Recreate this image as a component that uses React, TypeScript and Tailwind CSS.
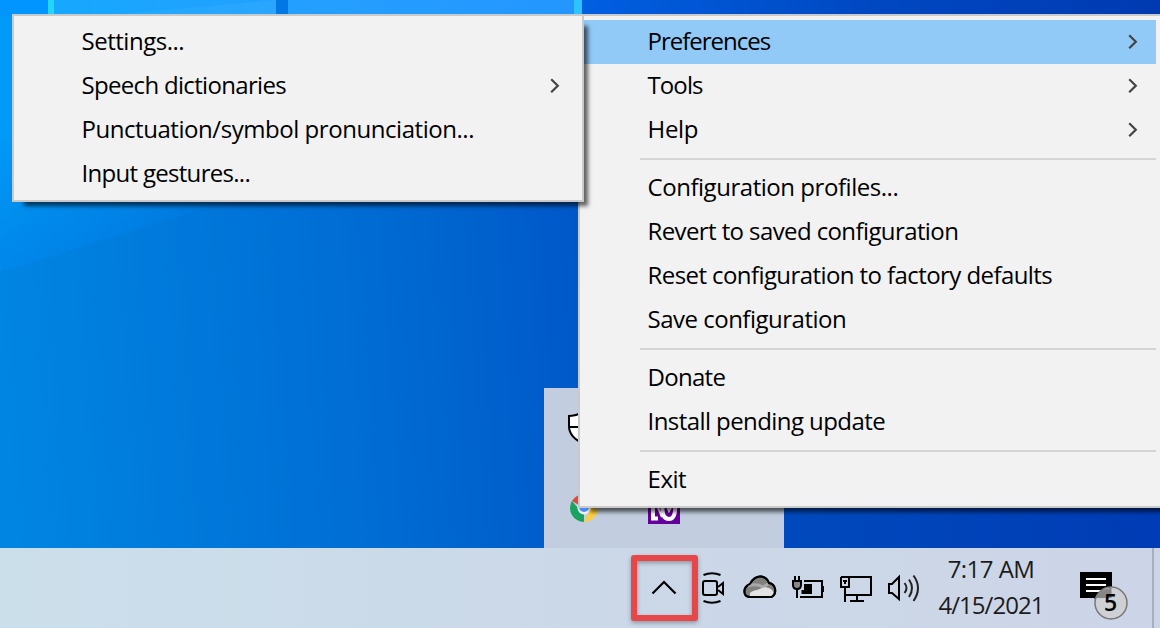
import type { ReactNode } from "react";

type Entry = { label: string; tracking: string; submenu?: boolean; active?: boolean } | "separator";

const preferences: Entry[] = [
  { label: "Settings...", tracking: "tracking-[-0.48px]", submenu: false },
  { label: "Speech dictionaries", tracking: "tracking-[-0.68px]", submenu: true },
  { label: "Punctuation/symbol pronunciation...", tracking: "tracking-[-0.45px]" },
  { label: "Input gestures...", tracking: "tracking-[-0.7px]" },
];

const mainMenu: Entry[] = [
  { label: "Preferences", tracking: "tracking-[-1px]", submenu: true, active: true },
  { label: "Tools", tracking: "tracking-[-0.9px]", submenu: true },
  { label: "Help", tracking: "tracking-[-0.3px]", submenu: true },
  "separator",
  { label: "Configuration profiles...", tracking: "tracking-[-0.46px]" },
  { label: "Revert to saved configuration", tracking: "tracking-[-0.6px]" },
  { label: "Reset configuration to factory defaults", tracking: "tracking-[-0.58px]" },
  { label: "Save configuration", tracking: "tracking-[-0.5px]" },
  "separator",
  { label: "Donate", tracking: "tracking-[-0.7px]" },
  { label: "Install pending update", tracking: "tracking-[-0.57px]" },
  "separator",
  { label: "Exit", tracking: "tracking-[-0.45px]" },
];

function Menu({ entries, className }: { entries: Entry[]; className: string }) {
  return (
    <ul
      className={`absolute border-2 border-[#cacaca] bg-[#f2f2f2] py-1 pr-1 text-[24px] text-black shadow-[8px_8px_4px_-4px_rgba(0,0,0,0.6)] ${className}`}
    >
      {entries.map((entry, i) =>
        entry === "separator" ? (
          <li key={i} className="flex h-[14px] items-center pl-[60px]">
            <span className="h-[2px] w-full bg-[#d5d5d5]" />
          </li>
        ) : (
          <li
            key={i}
            className={`flex h-11 items-center justify-between pr-[18px] pl-[67.5px] ${entry.active ? "bg-[#91c9f7]" : ""}`}
          >
            <span className={`pb-[2px] leading-[42px] whitespace-nowrap ${entry.tracking}`}>{entry.label}</span>
            {entry.submenu && (
              <svg width="10" height="16" viewBox="0 0 10 16" fill="none" stroke="#444" strokeWidth="2.2">
                <path d="M1.2 1.2 7.8 7.7 1.2 14.2" />
              </svg>
            )}
          </li>
        ),
      )}
    </ul>
  );
}

function TrayIcon({ x, children }: { x: number; children: ReactNode }) {
  return (
    <svg width="48" height="80" viewBox={`${x} 548 48 80`} fill="none" stroke="#000" strokeWidth="2" className="shrink-0">
      {children}
    </svg>
  );
}

function Wallpaper() {
  return (
    <svg width="1160" height="548" viewBox="0 0 1160 548" preserveAspectRatio="none" className="absolute inset-0">
      <defs>
        <linearGradient id="sky" gradientUnits="userSpaceOnUse" x1="0" y1="330" x2="1160" y2="250">
          <stop offset="0" stopColor="#0085e2" />
          <stop offset="0.14" stopColor="#007adc" />
          <stop offset="0.32" stopColor="#006cd3" />
          <stop offset="0.5" stopColor="#0058c8" />
          <stop offset="0.67" stopColor="#0049bd" />
          <stop offset="1" stopColor="#003bb4" />
        </linearGradient>
        <linearGradient id="beam" gradientUnits="userSpaceOnUse" x1="0" y1="130" x2="70" y2="270">
          <stop offset="0" stopColor="#009af8" />
          <stop offset="0.55" stopColor="#008fee" stopOpacity="0.9" />
          <stop offset="1" stopColor="#0084ee" stopOpacity="0.5" />
        </linearGradient>
        <linearGradient id="fade" gradientUnits="userSpaceOnUse" x1="0" y1="0" x2="260" y2="0">
          <stop offset="0" stopColor="#fff" />
          <stop offset="0.5" stopColor="#fff" stopOpacity="0.75" />
          <stop offset="1" stopColor="#fff" stopOpacity="0" />
        </linearGradient>
        <mask id="beamMask">
          <rect width="580" height="300" fill="url(#fade)" />
        </mask>
        <linearGradient id="pane" x1="0" x2="1">
          <stop offset="0" stopColor="#16a8ff" />
          <stop offset="0.5" stopColor="#249fff" />
          <stop offset="1" stopColor="#2496ff" />
        </linearGradient>
        <linearGradient id="top" x1="0" x2="1">
          <stop offset="0" stopColor="#005fe0" />
          <stop offset="0.5" stopColor="#0048c2" />
          <stop offset="1" stopColor="#003ab1" />
        </linearGradient>
      </defs>
      <rect width="1160" height="548" fill="url(#sky)" />
      <path d="M0 0H580V120L200 210 0 272Z" fill="url(#beam)" mask="url(#beamMask)" />
      <rect width="50" height="16" fill="#0095ff" />
      <rect x="48" width="528" height="16" fill="url(#pane)" />
      <path d="M120 14 276 0V14Z" fill="#3cb4ff" opacity="0.3" />
      <rect x="48" width="6" height="16" fill="#24d5f8" />
      <rect x="276" width="12" height="16" fill="#0077e4" />
      <rect x="574" width="8" height="16" fill="#2bc4fc" />
      <rect x="582" width="578" height="16" fill="url(#top)" />
    </svg>
  );
}

function HiddenIcons() {
  return (
    <div className="absolute top-[388px] left-[544px] grid h-40 w-60 grid-cols-3 grid-rows-2 place-items-center bg-[#c2cee0]">
      <svg width="32" height="32" viewBox="0 0 32 32" fill="#fff" stroke="#000" strokeWidth="2">
        <path d="M1 4C7 4 11 2 16 0 21 2 25 4 31 4V14C31 22 25 28 16 32 7 28 1 22 1 14Z" />
        <path d="M1 15H31M16 1V31" />
      </svg>
      <span />
      <span />
      <svg width="28" height="28" viewBox="0 0 28 28">
        <path d="M14 14 1.9 7A14 14 0 0 1 26.1 7Z" fill="#dd4b3e" />
        <path d="M14 14 14 28A14 14 0 0 1 1.9 7L8 14Z" fill="#1aa260" />
        <path d="M14 14 26.1 7A14 14 0 0 1 14 28L19 18Z" fill="#ffce41" />
        <circle cx="14" cy="14" r="6.5" fill="#f2f2f2" />
        <circle cx="14" cy="13" r="5" fill="#4c8bf5" />
      </svg>
      <svg width="32" height="32" viewBox="0 0 32 32" fill="none">
        <rect width="32" height="32" fill="#64009a" />
        <path d="M5 10V26.5H10" stroke="#fff" strokeWidth="4" />
        <path d="M15 10C13 24 17 27 21 27S28 23 27 12" stroke="#fff" strokeWidth="4" />
        <path d="M8 11 14 25M18 12 21 19 25 12" stroke="#fff" strokeWidth="2" />
      </svg>
      <span />
    </div>
  );
}

const cloud =
  "M750 597C742.5 596.5 742.5 587 750 584 752 579 757 576 761 576.5 765 577 768 580 769 583 776 584 777.5 594 771.5 597Z";

export default function App() {
  return (
    <div className="relative flex h-[628px] w-[1160px] flex-col overflow-hidden font-['Open_Sans','Noto_Sans',sans-serif]">
      <main className="relative flex-1">
        <Wallpaper />
        <HiddenIcons />
        <Menu entries={mainMenu} className="top-[14px] left-[578px] w-[584px]" />
        <Menu entries={preferences} className="top-[14px] left-[12px] w-[572px]" />
      </main>

      <footer className="flex h-20 shrink-0 bg-linear-to-r from-[#cbdfeb] via-[#cbd8e8] to-[#ccd5e7] pl-[640px]">
        <TrayIcon x={640}>
          <path d="M652.5 593.5 664 582 675.5 593.5" strokeWidth="2.2" />
        </TrayIcon>
        <TrayIcon x={688}>
          <rect x="703" y="581" width="14" height="14" rx="2" />
          <path d="M718 587 723 583V594L718 590" />
          <path d="M703.5 575Q712 571.5 720.5 575M703.5 601Q712 604.5 720.5 601" />
        </TrayIcon>
        <TrayIcon x={736}>
          <path d={cloud} fill="#808080" />
          <path d="M748 586Q756 583 763 587L768 584" stroke="#a8a8a8" strokeWidth="3" />
          <path d="M750 596C749 592 753 590.5 757 590L762 588Q768 586 772 590 775 594 771 596Z" fill="#e2e2e2" stroke="none" />
          <path d={cloud} strokeWidth="1.8" />
        </TrayIcon>
        <TrayIcon x={784}>
          <path d="M804 581H822V597H800M823 586V592" />
          <path d="M804 584H812V594H801.5V590H804Z" fill="#000" stroke="none" />
          <path d="M795 576V581M799 576V581M797 589V598" />
          <path d="M793 581H801V585Q801 589 797 589T793 585Z" fill="#888" />
        </TrayIcon>
        <TrayIcon x={832}>
          <path d="M841 577H871V595H845M841 577V587H849V577M845 587V602M857 595V601M850 601H864" />
          <path d="M843 581H847M845 580V584" />
        </TrayIcon>
        <TrayIcon x={880}>
          <path d="M889 584H892L899 577V599L892 593H889Z" />
          <path
            d="M904.5 583Q908.500 588 904.5 593M909 579.5Q915 588 909 597M913.5 575.5Q922.5 588 913.5 601"
            stroke="#222"
          />
        </TrayIcon>
        <div className="flex w-[126px] shrink-0 flex-col items-center pt-[3px] text-[24px] leading-[36px] whitespace-nowrap text-[#1c1c1c]">
          <span className="tracking-[-0.55px]">7:17 AM</span>
          <span className="tracking-[-0.95px]">4/15/2021</span>
        </div>
        <div className="relative w-[98px] shrink-0">
          <svg width="98" height="80" viewBox="1054 548 98 80">
            <path d="M1080 572H1112V598H1100V604L1094 598H1080Z" fill="#000" />
            <path d="M1086 579H1106M1086 585H1106M1086 591H1106" stroke="#fff" strokeWidth="2" />
            <circle cx="1111" cy="603" r="16" fill="#cfd0d4" stroke="#777" strokeWidth="1.5" />
            <path d="M1096 598A16 16 0 0 1 1111.500 588V598Z" fill="#858585" />
          </svg>
          <span className="absolute top-[38px] left-[50px] text-[23px] leading-[32px] font-semibold text-black">5</span>
        </div>
        <div className="w-2 border-l-2 border-[#a5afbd]" />
      </footer>

      <div className="absolute top-[555px] left-[631px] h-[66px] w-[67px] rounded-[3px] border-6 border-[#e84749] drop-shadow-[0_2px_2px_rgba(0,0,0,0.3)]" />
    </div>
  );
}
